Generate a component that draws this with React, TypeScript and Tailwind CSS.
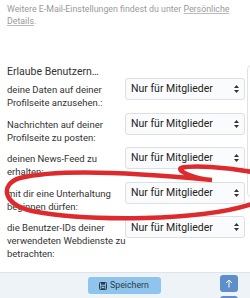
import React from 'react';

const rows: string[][] = [
  ['deine Daten auf deiner', 'Profilseite anzusehen.:'],
  ['Nachrichten auf deiner', 'Profilseite zu posten:'],
  ['deinen News-Feed zu', 'erhalten:'],
  ['mit dir eine Unterhaltung', 'beginnen dürfen:'],
  ['die Benutzer-IDs deiner', 'verwendeten Webdienste zu', 'betrachten:'],
];

const SelectArrows: React.FC = () => (
  <svg width="5" height="8" viewBox="0 0 5 8" className="shrink-0">
    <path d="M2.5 0 L5 3 L0 3 Z" fill="#333" />
    <path d="M2.5 8 L5 5 L0 5 Z" fill="#333" />
  </svg>
);

const App: React.FC = () => {
  return (
    <div className="relative w-[250px] h-[298px] overflow-hidden bg-white font-['Roboto',sans-serif]">
      {/* Intro */}
      <div className="px-[7px] pt-[3px] text-[8.8px] leading-[12px] text-[#9a9a9a]">
        Weitere E-Mail-Einstellungen findest du unter{' '}
        <span className="underline decoration-[#bbb]">Persönliche Details</span>.
      </div>

      <h3 className="px-[7px] mt-[39px] text-[10.5px] leading-[12px] text-[#333]">Erlaube Benutzern…</h3>

      {/* Permission rows */}
      <div className="pl-[7px] pr-[5px] flex flex-col gap-[3.6px]">
        {rows.map((lines, i) => (
          <div key={i} className="flex items-start justify-between">
            <div className="pt-[5px] w-[118px] text-[9.5px] leading-[13px] text-[#333]">
              {lines.map((l, j) => (
                <div key={j} className="whitespace-nowrap">{l}</div>
              ))}
            </div>
            <div className="w-[120px] h-[22px] flex items-center justify-between pl-[5px] pr-[5px] border border-[#dcdfe3] rounded-[3px] bg-[#fafbfc] text-[10.5px] text-[#222]">
              <span>Nur für Mitglieder</span>
              <SelectArrows />
            </div>
          </div>
        ))}
      </div>

      {/* Footer */}
      <div className="absolute left-0 right-0 top-[272px] bottom-0 border-t border-[#dde3ea] bg-[#eef3f8]">
        <div className="flex justify-center pt-[4px] pr-[2px]">
          <button className="w-[73px] h-[17px] flex items-center justify-center gap-[3px] rounded-[3px] bg-[#8fc5ec] text-[8.8px] text-[#2d3a48]">
            <svg width="8" height="8" viewBox="0 0 8 8">
              <rect x="0.5" y="0.5" width="7" height="7" rx="0.8" fill="none" stroke="#2d3a48" strokeWidth="1" />
              <rect x="2" y="0.5" width="4" height="2.2" fill="#2d3a48" />
              <rect x="2.2" y="4.2" width="3.6" height="2.3" fill="none" stroke="#2d3a48" strokeWidth="0.8" />
            </svg>
            Speichern
          </button>
        </div>
      </div>

      {/* scroll buttons */}
      <div className="absolute left-[220px] top-[275px] w-[18px] h-[17px] rounded-[3px] bg-[#5f8fcb] flex items-center justify-center">
        <svg width="8" height="9" viewBox="0 0 8 9">
          <path d="M4 8.5 V1 M1 4 L4 1 L7 4" stroke="white" strokeWidth="1" fill="none" />
        </svg>
      </div>
      <div className="absolute left-[220px] top-[296px] w-[18px] h-[17px] rounded-[3px] bg-[#5f8fcb]" />

      {/* side panel edge */}
      <div className="absolute left-[247px] top-[65px] w-[10px] h-[132px] rounded-[4px] border border-[#e2e2e2] bg-white" />

      {/* red hand-drawn mark */}
      <svg className="absolute inset-0 pointer-events-none" width="250" height="298" viewBox="0 0 250 298">
        <path
          d="M252 172 C225 167 192 165 181 168 C176 171 196 179 212 180 C150 174 60 168 20 178 C0 184 2 204 32 211 C90 222 200 221 252 204"
          fill="none"
          stroke="#dd2a2c"
          strokeWidth="4.5"
          strokeLinecap="round"
        />
      </svg>
    </div>
  );
};

export default App;
